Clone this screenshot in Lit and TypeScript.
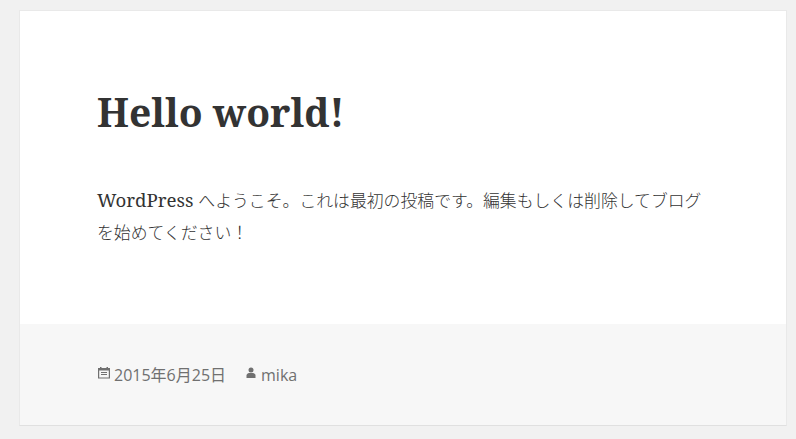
import { LitElement, html, css } from "lit";
import { customElement } from "lit/decorators.js";

@customElement("app-root")
export class AppRoot extends LitElement {
  static styles = css`
    :host {
      display: block;
      height: 439px;
      background: #f1f1f1;
      overflow: hidden;
      padding: 10px 9px 0 19px;
      box-sizing: border-box;
    }
    .card {
      background: #fff;
      border: 1px solid #e9e9e9;
      border-bottom-color: #e0e0e0;
      height: 416px;
      box-sizing: border-box;
      display: flex;
      flex-direction: column;
    }
    .main {
      flex: none;
      height: 313px;
      padding: 76px 77px 0 77px;
      box-sizing: border-box;
    }
    h1 {
      margin: 0 0 47px;
      font: 700 39px/50px "Noto Serif", "DejaVu Serif", serif;
      color: #333;
    }
    p {
      margin: 0;
      font: 400 18.7px/32px "Noto Serif", "Noto Sans CJK JP", serif;
      color: #333;
    }
    .ja {
      font: 300 16.85px/32px "Noto Sans CJK JP", sans-serif;
      color: #333;
    }
    footer {
      flex: 1;
      background: #f7f7f7;
      padding: 0 77px;
      display: flex;
      align-items: center;
      gap: 18px;
      font: 400 16px/24px "Open Sans", "Noto Sans CJK JP", sans-serif;
      color: #707070;
    }
    .meta { display: flex; align-items: center; gap: 3px; }
    svg { width: 14px; height: 14px; fill: #707070; flex: none; position: relative; top: -2px; }
  `;
  render() {
    return html`<div class="card">
      <div class="main">
        <h1>Hello world!</h1>
        <p lang="ja">WordPress <span class="ja">へようこそ。これは最初の投稿です。編集もしくは削除してブログを始めてください！</span></p>
      </div>
      <footer>
        <span class="meta"><svg viewBox="0 0 14 14"><path fill-rule="evenodd" d="M3 1h1.500v1h5V1H11v1h2v10.500H1V2h2zM2.200 4.500v7h9.600v-7zM4 6h6v1H4zM4 8h6v1H4z"/></svg>2015年6月25日</span>
        <span class="meta"><svg viewBox="0 0 14 14"><circle cx="7" cy="4" r="2.500"/><path d="M2.500 12V9.500C2.500 8 4 7 5 7h4c1 0 2.500 1 2.500 2.500V12z"/></svg>mika</span>
      </footer>
    </div>`;
  }
}
